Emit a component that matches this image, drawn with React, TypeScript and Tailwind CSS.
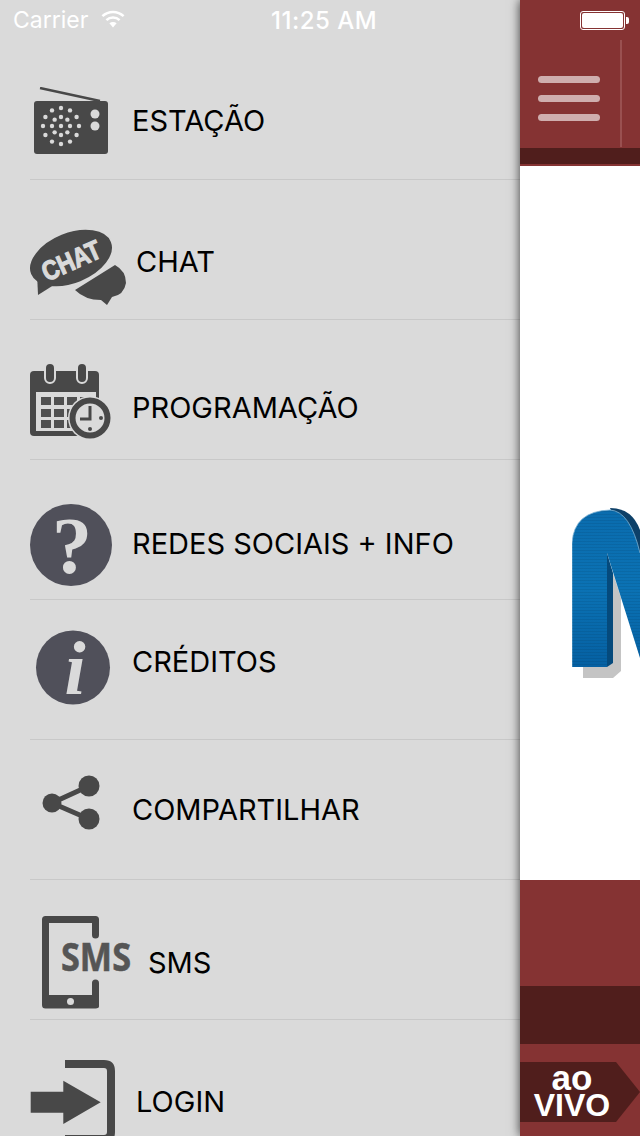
import React from 'react';

const RadioIcon = () => {
  const rings: [number, number][] = [[0, 1], [9, 8], [18, 12]];
  return (
    <svg width="74" height="67" viewBox="0 0 74 67" className="block">
      <line x1="6" y1="1" x2="66" y2="14" stroke="#484848" strokeWidth="2.5" />
      <rect x="0" y="14" width="74" height="53" rx="3" fill="#484848" />
      {rings.map(([r, n]) =>
        Array.from({ length: n }).map((_, i) => {
          const a = (i / n) * Math.PI * 2;
          return <circle key={`${r}-${i}`} cx={27 + r * Math.cos(a)} cy={39 + r * Math.sin(a)} r="2.2" fill="#dadada" />;
        })
      )}
      <circle cx="61" cy="27" r="4.5" fill="#dadada" />
      <circle cx="61" cy="39" r="4.5" fill="#dadada" />
    </svg>
  );
};

const ChatIcon = () => (
  <svg width="96" height="76" viewBox="0 0 96 76" className="block overflow-visible">
    <path d="M45 61 L85 36 Q96 42 96 54 Q94 66 82 68 L77 76 L71 71 Q55 71 45 61 Z" fill="#484848" />
    <ellipse cx="41" cy="29" rx="44" ry="26" transform="rotate(-22 41 29)" fill="#484848" stroke="#dadada" strokeWidth="2" />
    <path d="M7 44 L8 66 L27 54 Z" fill="#484848" />
    <text x="41" y="41" transform="rotate(-24 41 31)" textAnchor="middle" fontFamily="'Liberation Sans', sans-serif" fontWeight="700" fontSize="27" textLength="62" lengthAdjust="spacingAndGlyphs" fill="#dadada" stroke="#dadada" strokeWidth="1.2">CHAT</text>
  </svg>
);

const CalendarIcon = () => (
  <svg width="81" height="75" viewBox="0 0 81 75" className="block overflow-visible">
    <rect x="0" y="7" width="69" height="65" rx="4" fill="#484848" />
    <rect x="15" y="-1" width="10" height="20" rx="5" fill="#484848" stroke="#dadada" strokeWidth="2" />
    <rect x="47" y="-1" width="10" height="20" rx="5" fill="#484848" stroke="#dadada" strokeWidth="2" />
    <rect x="6" y="28" width="60" height="39" fill="#dadada" />
    {[33, 45, 56].map(y =>
      [11, 24, 37].map(x => <rect key={`${x}-${y}`} x={x} y={y} width="10" height="8" fill="#505050" />)
    )}
    <rect x="50" y="33" width="8" height="8" fill="#505050" />
    <circle cx="60" cy="54" r="22" fill="#dadada" />
    <circle cx="60" cy="54" r="17.5" fill="none" stroke="#484848" strokeWidth="6" />
    <path d="M60 42 V55 H50" fill="none" stroke="#484848" strokeWidth="3" />
    <circle cx="60" cy="65" r="2" fill="#484848" />
    <circle cx="71" cy="54" r="2" fill="#484848" />
  </svg>
);

const QuestionIcon = () => (
  <svg width="82" height="82" viewBox="0 0 82 82" className="block overflow-visible">
    <circle cx="41" cy="41" r="41" fill="#50505a" />
    <text x="42" y="69" textAnchor="middle" fontFamily="'Liberation Serif', serif" fontWeight="700" fontSize="80" fill="#dadada">?</text>
  </svg>
);

const InfoIcon = () => (
  <svg width="74" height="75" viewBox="0 0 74 75" className="block overflow-visible">
    <circle cx="37" cy="37.5" r="37" fill="#50505a" />
    <text x="39" y="64" textAnchor="middle" fontFamily="'Liberation Serif', serif" fontWeight="700" fontStyle="italic" fontSize="76" fill="#dadada">i</text>
  </svg>
);

const ShareIcon = () => (
  <svg width="58" height="56" viewBox="0 0 58 56" className="block">
    <path d="M47 11 L10 28 L47 44" fill="none" stroke="#484848" strokeWidth="5" />
    <circle cx="47" cy="11" r="10.5" fill="#484848" />
    <circle cx="10" cy="28" r="9.5" fill="#484848" />
    <circle cx="47" cy="44" r="10.5" fill="#484848" />
  </svg>
);

const SmsIcon = () => (
  <svg width="90" height="93" viewBox="0 0 90 93" className="block overflow-visible">
    <path d="M53.5 19 V3.5 H3.5 V89 H53.5 V67" fill="none" stroke="#484848" strokeWidth="7" strokeLinejoin="round" strokeLinecap="round" />
    <rect x="1" y="79" width="56" height="13" rx="2" fill="#484848" />
    <circle cx="28.5" cy="85.5" r="3.5" fill="#dadada" />
    <text x="19" y="55" fontFamily="'Open Sans', sans-serif" fontWeight="700" fontSize="40" textLength="70" lengthAdjust="spacingAndGlyphs" fill="#555555" stroke="#555555" strokeWidth="0.6">SMS</text>
  </svg>
);

const LoginIcon = () => (
  <svg width="86" height="90" viewBox="0 0 86 90" className="block">
    <path d="M35 4 H74 Q81 4 81 11 V72 Q81 79 74 79 H35" fill="none" stroke="#484848" strokeWidth="8" />
    <polygon points="0.7,31.7 33.3,31.7 33.3,20.7 70.7,42.3 33.3,64 33.3,52.7 0.7,52.7" fill="#484848" />
  </svg>
);

const NLogo = () => (
  <svg width="68" height="172" viewBox="0 0 68 172" className="block">
    <defs>
      <linearGradient id="nFace" x1="0" y1="0" x2="0" y2="1">
        <stop offset="0" stopColor="#0a6cae" />
        <stop offset="0.5" stopColor="#0b72b4" />
        <stop offset="1" stopColor="#0560a2" />
      </linearGradient>
      <pattern id="nLines" width="4" height="3" patternUnits="userSpaceOnUse">
        <rect width="4" height="1" fill="#000000" opacity="0.07" />
      </pattern>
    </defs>
    <polygon points="41,65 49,90 49,163 41,170 11,170 11,159 35,159" fill="#c4c4c4" />
    <path d="M38 0 Q60 0 68 22 V60 L50 30 Z" fill="#0d4068" />
    <polygon points="35,45 41,65 41,155 35,159" fill="#054a7c" />
    <path d="M0 159 V35 Q2 3 38 2 Q58 3 68 45 V150 L35 45 V159 Z" fill="url(#nFace)" />
    <path d="M0 159 V35 Q2 3 38 2 Q58 3 68 45" fill="none" stroke="#7fb4d6" strokeWidth="0.8" />
    <path d="M0 159 V35 Q2 3 38 2 Q58 3 68 45 V150 L35 45 V159 Z" fill="url(#nLines)" />
  </svg>
);

const items = [
  { label: 'ESTAÇÃO', icon: <RadioIcon />, iconBox: 'ml-[4px] mt-[47px]', labelBox: 'ml-[24px] mt-[63px]' },
  { label: 'CHAT', icon: <ChatIcon />, iconBox: 'ml-0 mt-[49px]', labelBox: 'ml-[10px] mt-[64px]' },
  { label: 'PROGRAMAÇÃO', icon: <CalendarIcon />, iconBox: 'ml-0 mt-[44px]', labelBox: 'ml-[21px] mt-[70px]' },
  { label: 'REDES SOCIAIS + INFO', icon: <QuestionIcon />, iconBox: 'ml-0 mt-[44px]', labelBox: 'ml-[20px] mt-[66px]' },
  { label: 'CRÉDITOS', icon: <InfoIcon />, iconBox: 'ml-[6px] mt-[30px]', labelBox: 'ml-[22px] mt-[44px]' },
  { label: 'COMPARTILHAR', icon: <ShareIcon />, iconBox: 'ml-[12px] mt-[35px]', labelBox: 'ml-[32px] mt-[52px]' },
  { label: 'SMS', icon: <SmsIcon />, iconBox: 'ml-[12px] mt-[36px]', labelBox: 'ml-[16px] mt-[65px]' },
  { label: 'LOGIN', icon: <LoginIcon />, iconBox: 'ml-0 mt-[40px]', labelBox: 'ml-[20px] mt-[64px]' },
];

const StatusBar = () => (
  <div className="absolute top-0 left-0 w-[640px] h-[40px] flex items-center pt-[1px] pl-[13px] pr-[11px] text-white font-['Inter',sans-serif]">
    <span className="w-[76px] text-[23px] whitespace-nowrap">Carrier</span>
    <svg width="26" height="18" viewBox="0 0 24 17" className="ml-[11px] -mt-[3px]">
      <path d="M12 16.5 L8.6 12.6 A5 5 0 0 1 15.4 12.6 Z" fill="#ffffff" />
      <path d="M5.8 9.6 A9 9 0 0 1 18.2 9.6" fill="none" stroke="#ffffff" strokeWidth="2.4" />
      <path d="M2 5.8 A14.5 14.5 0 0 1 22 5.8" fill="none" stroke="#ffffff" strokeWidth="2.4" />
    </svg>
    <span className="ml-[145px] text-[24px] font-medium tracking-[0.5px] whitespace-nowrap">11:25 AM</span>
    <div className="ml-auto -mt-[1px] flex items-center">
      <div className="w-[45px] h-[19px] rounded-[3px] border border-white bg-[#853333] p-px">
        <div className="w-full h-full rounded-[2px] bg-white" />
      </div>
      <div className="ml-px w-[3px] h-[7px] rounded-r-[2px] bg-white" />
    </div>
  </div>
);

export default function App() {
  return (
    <div className="relative flex w-[640px] h-[1136px] overflow-hidden bg-[#dadada] font-['Inter',sans-serif]">
      <div className="w-[520px] shrink-0 pt-[40px] pl-[30px]">
        {items.map(item => (
          <div key={item.label} className="flex items-start h-[140px] border-b border-[#c8c8c8]">
            <div className={`shrink-0 ${item.iconBox}`}>{item.icon}</div>
            <span className={`text-[29px] leading-[36px] text-black whitespace-nowrap ${item.labelBox}`}>{item.label}</span>
          </div>
        ))}
      </div>

      <div className="relative w-[120px] shrink-0 flex flex-col bg-[#853333] shadow-[0_0_10px_rgba(0,0,0,0.75)]">
        <div className="flex items-start h-[148px] shrink-0">
          <div className="ml-[18px] mt-[76px] w-[62px] flex flex-col gap-[12px]">
            <div className="h-[7px] rounded-full bg-[#cfaeae]" />
            <div className="h-[7px] rounded-full bg-[#cfaeae]" />
            <div className="h-[7px] rounded-full bg-[#cfaeae]" />
          </div>
          <div className="ml-[20px] mt-[40px] w-[2px] h-[107px] bg-[#9a5050]" />
        </div>
        <div className="h-[16px] shrink-0 bg-[#501e1c]" />
        <div className="h-[2px] shrink-0 bg-[#853333]" />
        <div className="h-[714px] shrink-0 overflow-hidden bg-white pl-[52px] pt-[342px]">
          <NLogo />
        </div>
        <div className="h-[106px] shrink-0" />
        <div className="h-[58px] shrink-0 bg-[#501e1c]" />
        <div className="pt-[18px]">
          <div className="w-[120px] h-[60px] flex flex-col items-center pr-[16px] bg-[#501e1c] text-white font-bold font-['Liberation_Sans',sans-serif] [clip-path:polygon(0_0,96px_0,120px_50%,96px_100%,0_100%)]">
            <span className="text-[35px] leading-[28px] mt-[2px]">ao</span>
            <span className="text-[32px] leading-[24px] mt-[1px]">VIVO</span>
          </div>
        </div>
      </div>

      <StatusBar />
    </div>
  );
}
